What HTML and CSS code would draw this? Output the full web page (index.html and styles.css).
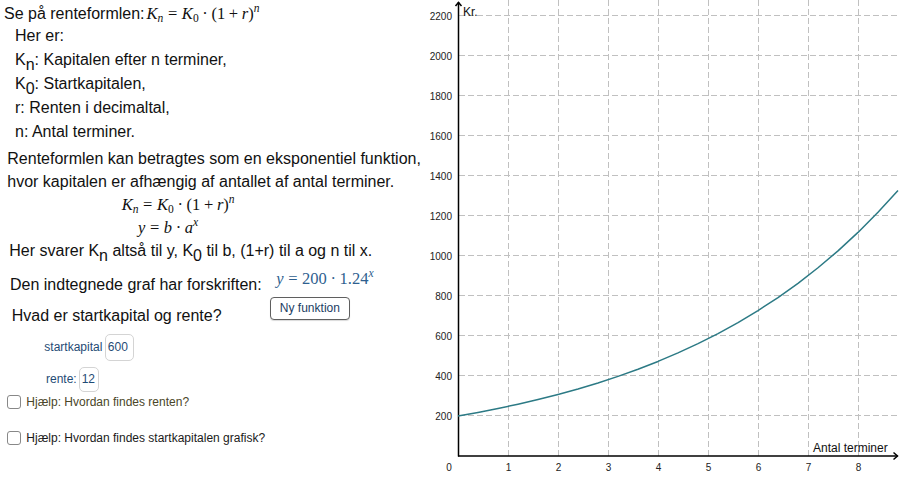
FILE: index.html
```html
<!DOCTYPE html>
<html lang="da">
<head>
<meta charset="utf-8">
<title>Renteformlen</title>
<link rel="stylesheet" href="styles.css">
</head>
<body>
<div class="app">
  <div class="left">
    <div class="row r1"><span>Se på renteformlen:</span><span class="math m-top"><i>K</i><sub class="ms"><i>n</i></sub><span class="rel">=</span><i>K</i><sub class="ms">0</sub><span class="bin">·</span>(1<span class="bin">+</span><i>r</i>)<sup class="ms"><i>n</i></sup></span></div>
    <div class="row ind">Her er:</div>
    <div class="row ind">K<sub class="ts">n</sub>: Kapitalen efter n terminer,</div>
    <div class="row ind">K<sub class="ts">0</sub>: Startkapitalen,</div>
    <div class="row ind">r: Renten i decimaltal,</div>
    <div class="row ind">n: Antal terminer.</div>
    <div class="row t7">Renteformlen kan betragtes som en eksponentiel funktion,</div>
    <div class="row t8">hvor kapitalen er afhængig af antallet af antal terminer.</div>
    <div class="row mrow f1"><span class="math"><i>K</i><sub class="ms"><i>n</i></sub><span class="rel">=</span><i>K</i><sub class="ms">0</sub><span class="bin">·</span>(1<span class="bin">+</span><i>r</i>)<sup class="ms"><i>n</i></sup></span></div>
    <div class="row mrow f2"><span class="math"><i>y</i><span class="rel">=</span><i>b</i><span class="bin">·</span><i>a</i><sup class="ms"><i>x</i></sup></span></div>
    <div class="row t9">Her svarer K<sub class="ts">n</sub> altså til y, K<sub class="ts">0</sub> til b, (1+r) til a og n til x.</div>
    <div class="row t10"><span>Den indtegnede graf har forskriften:</span><span class="math blue m-fn"><i>y</i><span class="rel">=</span>200<span class="bin">·</span>1.24<sup class="ms"><i>x</i></sup></span></div>
    <div class="qrow">
      <span class="q">Hvad er startkapital og rente?</span>
      <span class="btn">Ny funktion</span>
    </div>
    <div class="field f-start"><span class="lbl">startkapital</span><span class="inp inp-start">600</span></div>
    <div class="field f-rente"><span class="lbl">rente:</span><span class="inp inp-rente">12</span></div>
    <div class="check c1"><span class="box"></span><span class="ctext">Hjælp: Hvordan findes renten?</span></div>
    <div class="check c2"><span class="box"></span><span class="ctext">Hjælp: Hvordan findes startkapitalen grafisk?</span></div>
  </div>
  <div class="graph">
    <svg class="plot" width="475" height="480" viewBox="425 0 475 480" xmlns="http://www.w3.org/2000/svg">
      <g class="grid">
        <line x1="508.5" y1="0" x2="508.5" y2="456"/>
        <line x1="558.5" y1="0" x2="558.5" y2="456"/>
        <line x1="608.5" y1="0" x2="608.5" y2="456"/>
        <line x1="658.5" y1="0" x2="658.5" y2="456"/>
        <line x1="708.5" y1="0" x2="708.5" y2="456"/>
        <line x1="758.5" y1="0" x2="758.5" y2="456"/>
        <line x1="808.5" y1="0" x2="808.5" y2="456"/>
        <line x1="858.5" y1="0" x2="858.5" y2="456"/>
        <line x1="459" y1="415.5" x2="900" y2="415.5"/>
        <line x1="459" y1="375.5" x2="900" y2="375.5"/>
        <line x1="459" y1="335.5" x2="900" y2="335.5"/>
        <line x1="459" y1="295.5" x2="900" y2="295.5"/>
        <line x1="459" y1="255.5" x2="900" y2="255.5"/>
        <line x1="459" y1="215.5" x2="900" y2="215.5"/>
        <line x1="459" y1="175.5" x2="900" y2="175.5"/>
        <line x1="459" y1="135.5" x2="900" y2="135.5"/>
        <line x1="459" y1="95.5" x2="900" y2="95.5"/>
        <line x1="459" y1="55.5" x2="900" y2="55.5"/>
        <line x1="459" y1="15.5" x2="900" y2="15.5"/>
      </g>
      <g class="axes">
        <line x1="458.5" y1="2" x2="458.5" y2="456.5"/>
        <line x1="458" y1="456" x2="897.5" y2="456"/>
        <polyline points="455.5,6 458.5,2.5 461.5,6"/>
        <polyline points="893.5,452.5 897.5,456 893.5,459.5"/>
      </g>
      <polyline class="curve" points="458,416 478,412.41 498,408.49 518,404.22 538,399.57 558,394.5 578,388.97 598,382.95 618,376.38 638,369.23 658,361.43 678,352.93 698,343.67 718,333.58 738,322.58 758,310.59 778,297.53 798,283.29 818,267.77 838,250.86 858,232.42 878,212.33 898,190.44"/>
      <g class="ylab">
        <text x="452" y="419.5">200</text>
        <text x="452" y="379.5">400</text>
        <text x="452" y="339.5">600</text>
        <text x="452" y="299.5">800</text>
        <text x="452" y="259.5">1000</text>
        <text x="452" y="219.5">1200</text>
        <text x="452" y="179.5">1400</text>
        <text x="452" y="139.5">1600</text>
        <text x="452" y="99.5">1800</text>
        <text x="452" y="59.5">2000</text>
        <text x="452" y="19.5">2200</text>
      </g>
      <g class="xlab">
        <text x="449" y="470.5">0</text>
        <text x="508.5" y="470.5">1</text>
        <text x="558.5" y="470.5">2</text>
        <text x="608.5" y="470.5">3</text>
        <text x="658.5" y="470.5">4</text>
        <text x="708.5" y="470.5">5</text>
        <text x="758.5" y="470.5">6</text>
        <text x="808.5" y="470.5">7</text>
        <text x="858.5" y="470.5">8</text>
      </g>
      <text class="axlab" x="463" y="15.5">Kr.</text>
      <text class="axlab" x="813" y="452">Antal terminer</text>
    </svg>
  </div>
</div>
</body>
</html>
```
FILE: styles.css
```css
html, body {
  margin: 0;
  padding: 0;
  background: #ffffff;
}
body {
  width: 900px;
  height: 480px;
  overflow: hidden;
  font-family: "Liberation Sans", Arial, sans-serif;
  color: #111111;
}
.app {
  display: flex;
  width: 900px;
  height: 480px;
}
.left {
  width: 425px;
  flex: none;
  padding-top: 2px;
  box-sizing: border-box;
  font-size: 16px;
}
.graph {
  width: 475px;
  flex: none;
}
.plot {
  display: block;
}

.row {
  height: 24px;
  line-height: 24px;
  white-space: nowrap;
}
.r1 {
  height: 22px;
  margin-left: 4px;
}
.ind {
  margin-left: 15px;
}
.t7 {
  margin-top: 2.5px;
  height: 23px;
  margin-left: 7.3px;
}
.t8 {
  height: 23px;
  margin-left: 7.3px;
}
.mrow {
  height: 23px;
  line-height: 23px;
}
.f1 {
  margin-left: 121.7px;
}
.f2 {
  margin-left: 138px;
}
.t9 {
  margin-left: 9.3px;
}
.t10 {
  margin-top: 10px;
  margin-left: 10px;
}

.ts {
  font-size: 16px;
  line-height: 0;
  vertical-align: -5px;
}

.math {
  font-family: "Liberation Serif", "Times New Roman", serif;
  font-size: 16.5px;
}
.math i {
  font-style: italic;
}
.ms {
  font-size: 0.7em;
  line-height: 0;
}
sub.ms {
  vertical-align: -0.22em;
}
sup.ms {
  vertical-align: 0.6em;
}
.rel {
  margin: 0 0.28em;
}
.bin {
  margin: 0 0.22em;
}
.m-top {
  margin-left: 2px;
}
.blue {
  color: #2f5f8f;
}
.m-fn {
  margin-left: 14.5px;
  position: relative;
  top: -5.5px;
}

.qrow {
  display: flex;
  align-items: flex-start;
  height: 31.7px;
}
.q {
  margin-left: 11.7px;
  margin-top: 7.7px;
  line-height: 24px;
  white-space: nowrap;
}
.btn {
  margin-left: 48.3px;
  width: 80px;
  height: 23px;
  box-sizing: border-box;
  border: 1.5px solid #5f5f5f;
  border-radius: 4px;
  font-size: 12px;
  line-height: 20px;
  text-align: center;
  color: #1c3d63;
  background: #ffffff;
  box-shadow: 0 1px 1px rgba(0, 0, 0, 0.15);
}

.field {
  display: flex;
  align-items: center;
  font-size: 12px;
  color: #1f4b75;
}
.f-start {
  margin-top: 5.8px;
  height: 27px;
  margin-left: 44.3px;
}
.f-rente {
  margin-top: 5.7px;
  height: 25.3px;
  margin-left: 46px;
}
.inp {
  box-sizing: border-box;
  border: 1px solid #d4d4d4;
  border-radius: 5px;
  background: #ffffff;
  display: flex;
  align-items: center;
}
.inp-start {
  margin-left: 3px;
  width: 29px;
  height: 27px;
  padding-left: 1.5px;
}
.inp-rente {
  margin-left: 2px;
  width: 20px;
  height: 25.3px;
  padding-left: 2px;
}

.check {
  display: flex;
  align-items: center;
  height: 14px;
  font-size: 12px;
  white-space: nowrap;
}
.c1 {
  margin-top: 3px;
  color: #4a4628;
}
.c2 {
  margin-top: 22px;
  color: #1a1a1a;
}
.box {
  margin-left: 7.3px;
  width: 14px;
  height: 14px;
  box-sizing: border-box;
  border: 1.5px solid #888888;
  border-radius: 3px;
  background: #ffffff;
}
.ctext {
  margin-left: 5px;
}

.grid line {
  stroke: #c0c0c0;
  stroke-width: 1;
  stroke-dasharray: 6 3;
}
.axes line,
.axes polyline {
  stroke: #000000;
  stroke-width: 1.5;
  fill: none;
}
.curve {
  fill: none;
  stroke: #2c7a85;
  stroke-width: 1.5;
  stroke-linejoin: round;
}
.ylab text {
  font-family: "Liberation Sans", Arial, sans-serif;
  font-size: 10px;
  fill: #222222;
  text-anchor: end;
}
.xlab text {
  font-family: "Liberation Sans", Arial, sans-serif;
  font-size: 10px;
  fill: #222222;
  text-anchor: middle;
}
.axlab {
  font-family: "Liberation Sans", Arial, sans-serif;
  font-size: 12px;
  fill: #111111;
}
```
